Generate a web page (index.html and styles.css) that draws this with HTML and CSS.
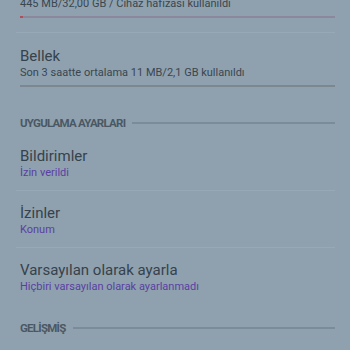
FILE: index.html
```html
<!DOCTYPE html>
<html>
<head>
<meta charset="utf-8">
<link rel="stylesheet" href="styles.css">
</head>
<body>
<div class="page">
  <div class="item storage">
    <div class="sub dark">445 MB/32,00 GB / Cihaz hafızası kullanıldı</div>
    <div class="bar"><div class="fill" style="width:1%"></div></div>
  </div>
  <div class="item memory">
    <div class="title">Bellek</div>
    <div class="sub dark">Son 3 saatte ortalama 11 MB/2,1 GB kullanıldı</div>
    <div class="bar gray"></div>
  </div>
  <div class="header first"><span>UYGULAMA AYARLARI</span><div class="rule"></div></div>
  <div class="item">
    <div class="title">Bildirimler</div>
    <div class="sub purple">İzin verildi</div>
  </div>
  <div class="item">
    <div class="title">İzinler</div>
    <div class="sub purple">Konum</div>
  </div>
  <div class="item last">
    <div class="title">Varsayılan olarak ayarla</div>
    <div class="sub purple">Hiçbiri varsayılan olarak ayarlanmadı</div>
  </div>
  <div class="header"><span>GELİŞMİŞ</span><div class="rule"></div></div>
</div>
</body>
</html>
```
FILE: styles.css
```css
html, body {
  margin: 0;
  padding: 0;
  background: #8fa1ae;
}
body {
  width: 350px;
  height: 350px;
  overflow: hidden;
  font-family: Roboto, "Noto Sans", sans-serif;
}
.page {
  padding: 0 15px 0 16px;
  margin-top: -4px;
}
.item {
  padding: 13px 0 10px 4px;
  border-bottom: 1px solid #98a9b5;
}
.item.storage {
  padding-top: 0;
  padding-bottom: 14px;
}
.item.memory {
  padding-top: 14px;
  padding-bottom: 0;
  border-bottom: none;
}
.item.last {
  padding-bottom: 0;
  border-bottom: none;
}
.title {
  font-size: 15px;
  color: #36424c;
  line-height: 18px;
}
.sub {
  font-size: 11px;
  line-height: 15px;
}
.dark { color: #3a4650; }
.purple { color: #5a3fa3; }
.bar {
  height: 2px;
  margin-top: 5px;
  background: #8a899c;
}
.bar .fill {
  height: 100%;
  background: #b04f5c;
}
.bar.gray {
  background: #7c8791;
  margin-bottom: 2px;
}
.header {
  display: flex;
  align-items: center;
  gap: 7px;
  padding: 27px 0 4px 4px;
}
.header span {
  font-size: 11.5px;
  line-height: 14px;
  font-weight: bold;
  color: #4a5864;
  letter-spacing: -0.75px;
}
.header .rule {
  flex: 1;
  height: 2px;
  background: #7b8b98;
}
```
